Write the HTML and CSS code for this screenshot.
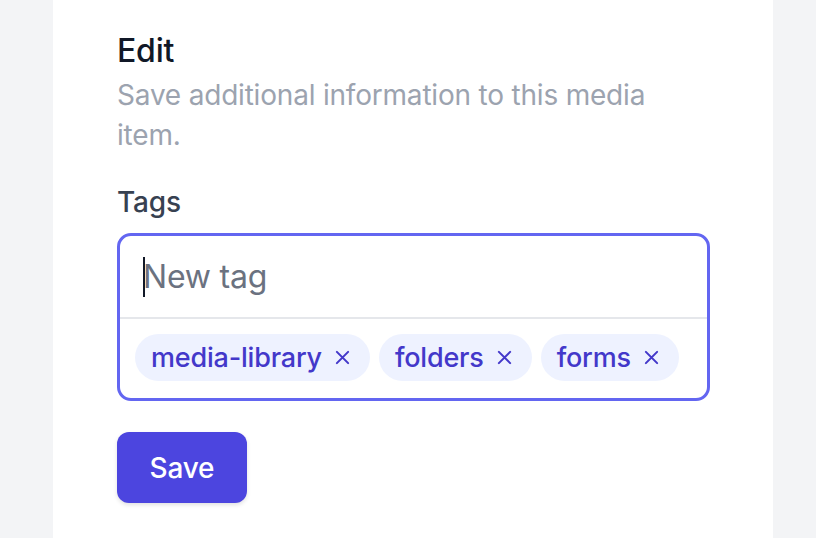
FILE: index.html
```html
<!DOCTYPE html>
<html lang="en">
<head>
<meta charset="utf-8">
<title>Edit media</title>
<link rel="stylesheet" href="styles.css">
</head>
<body>
<main class="panel">
  <h2 class="title">Edit</h2>
  <p class="subtitle">Save additional information to this media item.</p>
  <label class="label">Tags</label>
  <div class="tag-input">
    <div class="tag-input__field"><span class="caret"></span><span class="placeholder">New tag</span></div>
    <div class="tag-input__list">
      <span class="chip">media-library <svg class="chip__x" viewBox="0 0 16 16"><path d="M2 2L14 14M14 2L2 14"/></svg></span>
      <span class="chip">folders <svg class="chip__x" viewBox="0 0 16 16"><path d="M2 2L14 14M14 2L2 14"/></svg></span>
      <span class="chip">forms <svg class="chip__x" viewBox="0 0 16 16"><path d="M2 2L14 14M14 2L2 14"/></svg></span>
    </div>
  </div>
  <button class="btn">Save</button>
</main>
</body>
</html>
```
FILE: styles.css
```css
html, body { margin: 0; padding: 0; }
body {
  background: #f3f4f6;
  font-family: Inter, "Noto Sans", sans-serif;
  letter-spacing: -0.2px;
  height: 538px;
  overflow: hidden;
}
.panel {
  margin-left: 53px;
  width: 720px;
  box-sizing: border-box;
  height: 538px;
  background: #fff;
  padding: 27px 63px 0 64px;
}
.title {
  margin: 0;
  font-size: 32px;
  line-height: 48px;
  font-weight: 500;
  color: #111827;
}
.subtitle {
  margin: 0;
  font-size: 28px;
  line-height: 40px;
  color: #9ca3af;
}
.label {
  display: block;
  margin-top: 27px;
  font-size: 28px;
  line-height: 40px;
  font-weight: 500;
  color: #374151;
}
.tag-input {
  margin-top: 11px;
  border: 3px solid #6366f1;
  border-radius: 14px;
  overflow: hidden;
}
.tag-input__field {
  display: flex;
  align-items: center;
  padding-left: 23px;
  border-bottom: 2px solid #e5e7eb;
  box-sizing: border-box;
  height: 83px;
}
.caret {
  width: 2px;
  height: 40px;
  background: #111827;
  margin-right: -2px;
}
.placeholder {
  font-size: 32px;
  color: #6b7280;
}
.tag-input__list {
  display: flex;
  gap: 9px;
  padding: 15px 15px 17px;
}
.chip {
  display: inline-flex;
  align-items: center;
  gap: 13px;
  height: 47px;
  padding: 0 20px 0 16px;
  border-radius: 24px;
  background: #eef2ff;
  color: #4338ca;
  font-size: 27px;
  font-weight: 500;
  white-space: nowrap;
}
.chip__x {
  width: 15px;
  height: 15px;
  stroke: #4338ca;
  stroke-width: 2.2;
  stroke-linecap: round;
  fill: none;
}
.btn {
  display: block;
  margin-top: 31px;
  width: 130px;
  height: 71px;
  border: none;
  border-radius: 12px;
  background: #4c45df;
  color: #fff;
  font-family: inherit;
  font-size: 28px;
  font-weight: 500;
  letter-spacing: -0.2px;
  box-shadow: 0 2px 4px rgba(0,0,0,0.12);
}
```
